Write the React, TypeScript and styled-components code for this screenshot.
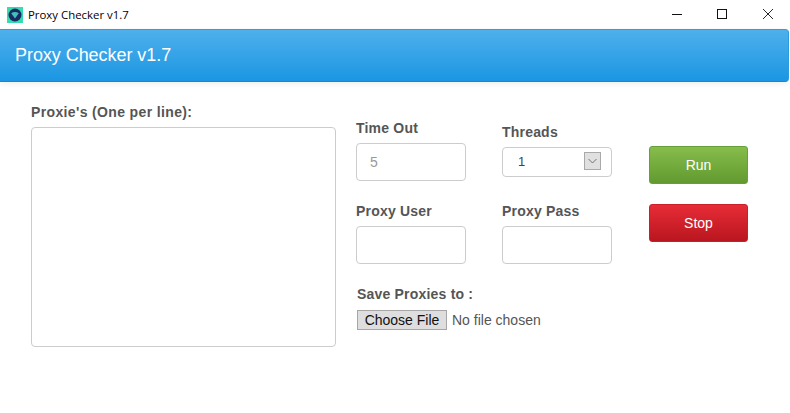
import React from "react";
import styled, { createGlobalStyle } from "styled-components";

const Global = createGlobalStyle`
  html, body { margin: 0; padding: 0; background: #fff; }
  body { font-family: "Liberation Sans", Arial, sans-serif; overflow: hidden; }
`;
const Window = styled.div`width: 790px; height: 413px; display: flex; flex-direction: column; overflow: hidden;`;
const TitleBar = styled.div`height: 29px; display: flex; align-items: center; padding-left: 7px; box-sizing: border-box;`;
const AppIcon = styled.svg`width: 16px; height: 16px; flex: none;`;
const WindowTitle = styled.span`margin-left: 5px; font: 11.4px "Open Sans", sans-serif; color: #000; flex: 1;`;
const WinButtons = styled.div`display: flex; height: 29px; margin-right: -1px;`;
const WinButton = styled.div`width: 46px; display: flex; align-items: center; justify-content: center; margin-top: -2px;`;
const Header = styled.header`
  height: 53px; box-sizing: border-box; margin-right: 1px; display: flex; align-items: center; padding-left: 15px;
  background: linear-gradient(#4eb0ec, #1b96e2);
  border: 1px solid #2a9bdc; border-top-color: #2e9fdd; border-bottom-color: #1a85cc; border-left: 0;
  border-radius: 0 4px 4px 0; box-shadow: 0 2px 6px rgba(0,0,0,.07);
  color: #fff; font-size: 18px; letter-spacing: -0.05px;
`;
const Body = styled.main`display: flex; padding: 22px 0 0 31px;`;
const Label = styled.label<{ $spacing?: number }>`
  display: block; font-size: 14px; font-weight: 700; line-height: 16px; color: #555;
  letter-spacing: ${p => p.$spacing ?? 0.2}px;
`;
const ProxyColumn = styled.section`width: 305px; margin-right: 20px;`;
const ProxyArea = styled.textarea`
  display: block; width: 305px; height: 220px; box-sizing: border-box; margin-top: 7px; resize: none; outline: 0;
  background: #fff; border: 1px solid #ccc; border-radius: 4px;
`;
const FieldColumn = styled.section`width: 256px; padding-top: 16px;`;
const FieldGrid = styled.div`display: grid; grid-template-columns: 110px 110px; column-gap: 36px; row-gap: 22px;`;
const Field = styled.div<{ $offset?: number }>`padding-top: ${p => p.$offset ?? 0}px;`;
const TextInput = styled.input`
  display: block; width: 110px; height: 38px; box-sizing: border-box; margin-top: 7px; padding: 0 13px; outline: 0;
  background: #fff; border: 1px solid #ccc; border-radius: 4px; font: 14px "Liberation Sans", Arial, sans-serif; color: #999;
  &::placeholder { color: #999; opacity: 1; }
`;
const SelectBox = styled.div`
  width: 110px; height: 30px; box-sizing: border-box; margin-top: 7px; padding: 0 10px 2px 15px;
  display: flex; align-items: center; justify-content: space-between;
  border: 1px solid #ccc; border-radius: 4px; font-size: 13px; color: #444;
`;
const SelectArrow = styled.span`
  width: 17px; height: 18px; box-sizing: border-box; display: flex; align-items: center; justify-content: center;
  background: #e0e0e0; border: 1px solid #a9a9a9;
`;
const SaveBlock = styled.div`margin: 22px 0 0 1px;`;
const FileRow = styled.div`display: flex; align-items: center; margin-top: 8px; font-size: 14px; color: #555;`;
const FileButton = styled.button`
  width: 90px; height: 20px; box-sizing: border-box; padding: 0; margin-right: 5px;
  background: #dedede; border: 1px solid #a6a6a6; font: 14px "Liberation Sans", Arial, sans-serif; color: #111;
`;
const ActionColumn = styled.section`width: 99px; margin-left: 37px; padding-top: 42px; display: flex; flex-direction: column; gap: 20px;`;
const Action = styled.button<{ $top: string; $bottom: string; $border: string }>`
  width: 99px; height: 38px; padding: 0; border-radius: 3px;
  border: 1px solid ${p => p.$border};
  background: linear-gradient(${p => p.$top}, ${p => p.$bottom});
  font: 14px "Liberation Sans", Arial, sans-serif; color: #fff;
`;

export default function App() {
  return (
    <Window>
      <Global />
      <TitleBar>
        <AppIcon viewBox="0 0 16 16">
          <rect width="16" height="16" fill="#35dcb0" />
          <circle cx="8" cy="8" r="6.5" fill="#1c2a63" />
          <path d="M4.2 6.2C6.3 4.6 9.7 4.6 11.8 6.2L8 11.5Z" fill="#3fc0b8" />
        </AppIcon>
        <WindowTitle>Proxy Checker v1.7</WindowTitle>
        <WinButtons>
          <WinButton>
            <svg width="12" height="12" viewBox="0 0 12 12"><path d="M2 6.5H12" stroke="#111" fill="none" /></svg>
          </WinButton>
          <WinButton>
            <svg width="12" height="12" viewBox="0 0 12 12"><rect x="1.5" y="1.5" width="9" height="9" stroke="#111" fill="none" /></svg>
          </WinButton>
          <WinButton>
            <svg width="12" height="12" viewBox="0 0 12 12"><path d="M1 1L11 11M11 1L1 11" stroke="#111" strokeWidth="0.9" fill="none" /></svg>
          </WinButton>
        </WinButtons>
      </TitleBar>
      <Header>Proxy Checker v1.7</Header>
      <Body>
        <ProxyColumn>
          <Label $spacing={0.36}>Proxie's (One per line):</Label>
          <ProxyArea />
        </ProxyColumn>
        <FieldColumn>
          <FieldGrid>
            <Field>
              <Label>Time Out</Label>
              <TextInput placeholder="5" />
            </Field>
            <Field $offset={4}>
              <Label>Threads</Label>
              <SelectBox>
                1
                <SelectArrow>
                  <svg width="11" height="6" viewBox="0 0 11 6"><path d="M1.5 1L5.5 5L9.5 1" stroke="#666" strokeWidth="0.9" fill="none" /></svg>
                </SelectArrow>
              </SelectBox>
            </Field>
            <Field>
              <Label>Proxy User</Label>
              <TextInput />
            </Field>
            <Field>
              <Label>Proxy Pass</Label>
              <TextInput />
            </Field>
          </FieldGrid>
          <SaveBlock>
            <Label>Save Proxies to :</Label>
            <FileRow>
              <FileButton>Choose File</FileButton>
              No file chosen
            </FileRow>
          </SaveBlock>
        </FieldColumn>
        <ActionColumn>
          <Action $top="#86bd4b" $bottom="#629a30" $border="#66a03a">Run</Action>
          <Action $top="#e72c37" $bottom="#b9161f" $border="#c81f29">Stop</Action>
        </ActionColumn>
      </Body>
    </Window>
  );
}
